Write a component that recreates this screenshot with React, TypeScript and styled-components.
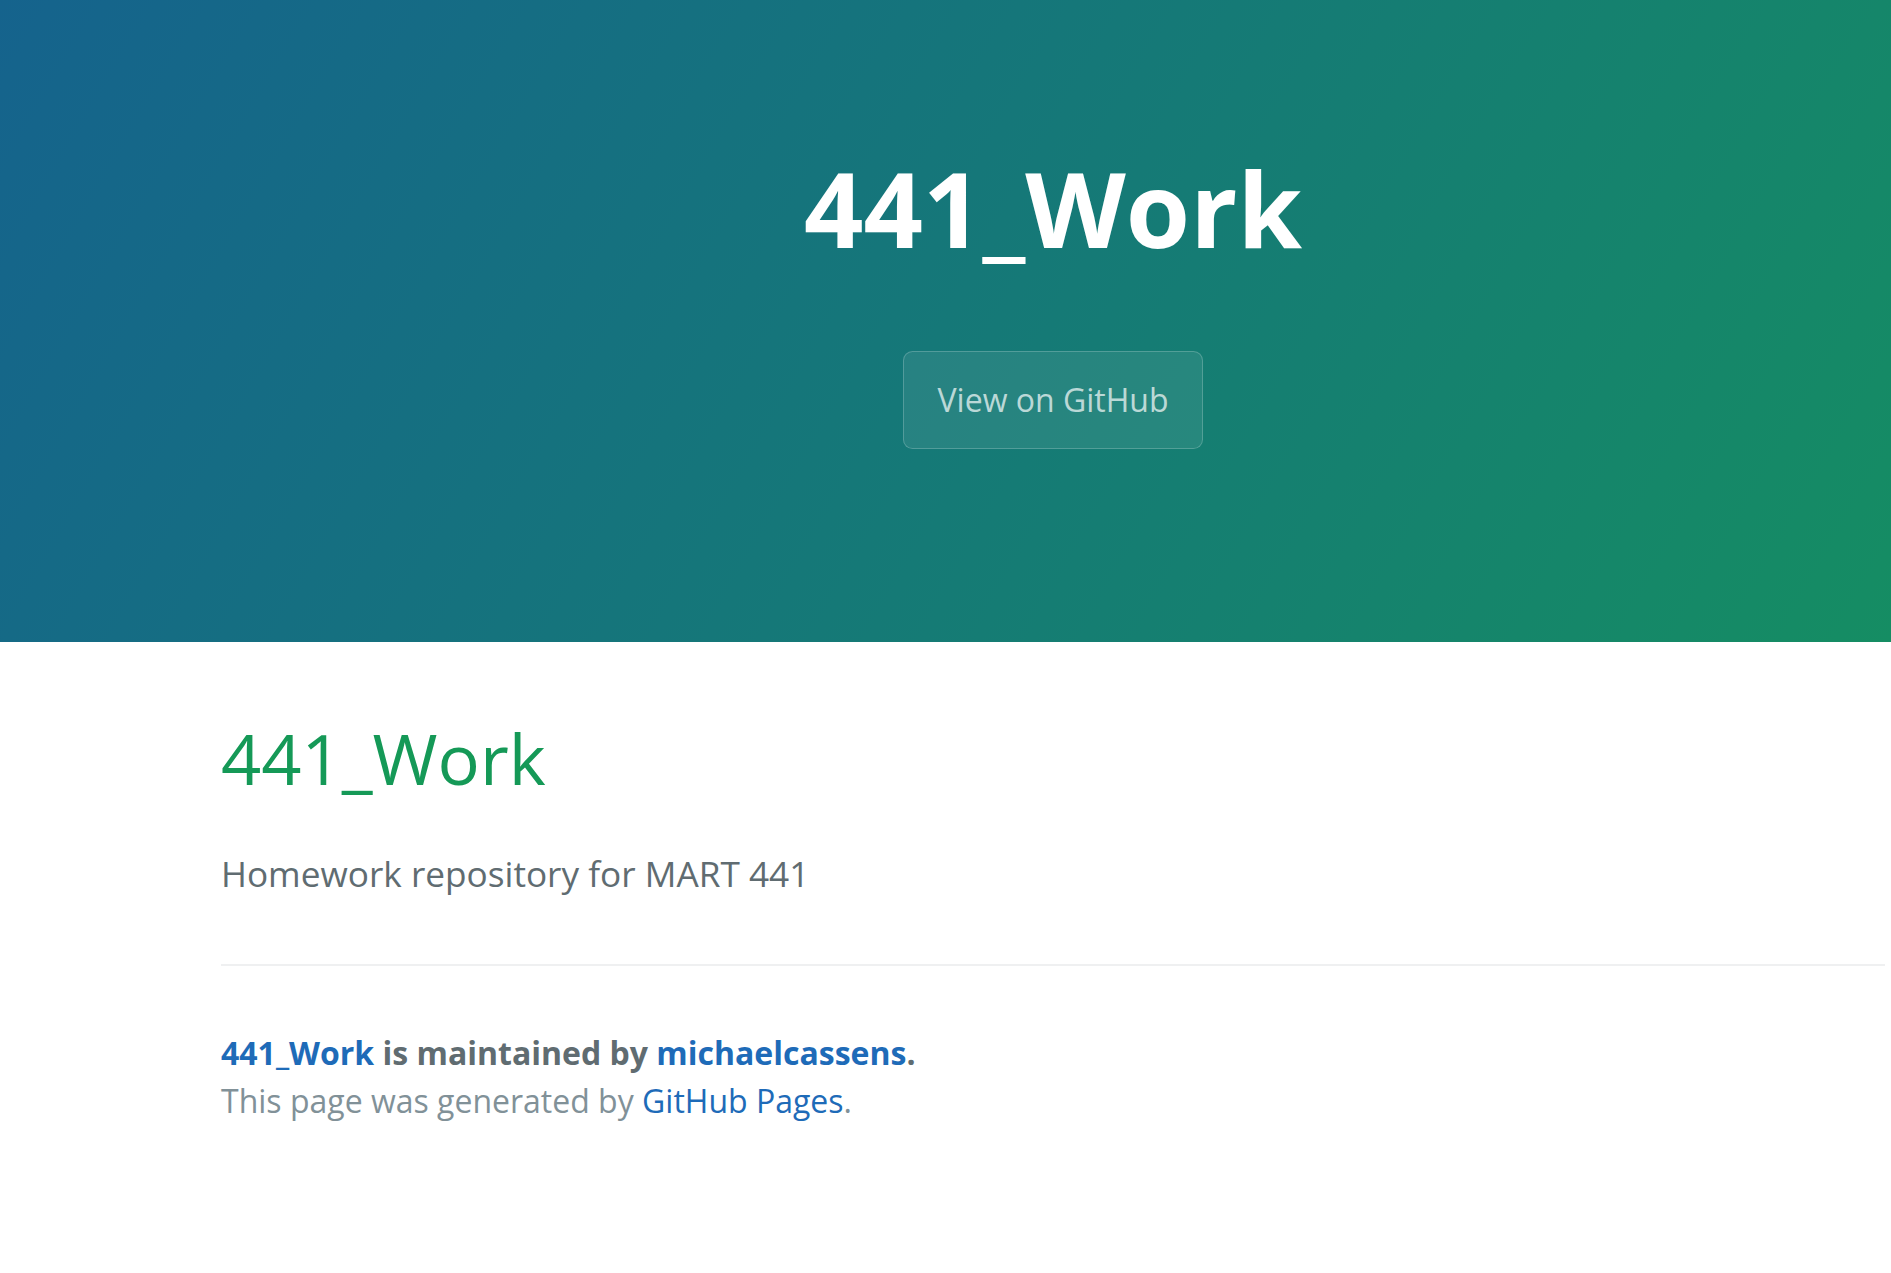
import styled, { createGlobalStyle } from "styled-components";

const GlobalStyle = createGlobalStyle`
  * { box-sizing: border-box; }
  html, body {
    margin: 0;
    padding: 0;
    background: #fff;
  }
  body {
    font-family: "Open Sans", "Helvetica Neue", Helvetica, Arial, sans-serif;
    line-height: 1.5;
    color: #606c71;
  }
`;

export default function App() {
  return (
    <>
      <GlobalStyle />
      <PageHeader>
        <ProjectName>441_Work</ProjectName>
        <HeaderButton href="#">View on GitHub</HeaderButton>
      </PageHeader>

      <MainContent>
        <SectionTitle>441_Work</SectionTitle>
        <Paragraph>Homework repository for MART 441</Paragraph>

        <SiteFooter>
          <FooterOwner>
            <FooterLink href="#">441_Work</FooterLink> is maintained by{" "}
            <FooterLink href="#">michaelcassens</FooterLink>.
          </FooterOwner>
          <FooterCredits>
            This page was generated by <FooterLink href="#">GitHub Pages</FooterLink>.
          </FooterCredits>
        </SiteFooter>
      </MainContent>
    </>
  );
}

const PageHeader = styled.section`
  display: flex;
  flex-direction: column;
  align-items: center;
  height: 642px;
  padding: 130px 0 0 215px;
  color: #fff;
  text-align: center;
  background-color: #157a78;
  background-image: linear-gradient(120deg, #15638d, #158d63);
`;

const ProjectName = styled.h1`
  margin: 0 0 3px;
  font-size: 104px;
  line-height: 156px;
  font-weight: 700;
`;

const HeaderButton = styled.a`
  display: inline-block;
  margin-top: 62px;
  padding: 24px 34px;
  font-size: 32px;
  line-height: 48px;
  color: rgba(255, 255, 255, 0.7);
  text-decoration: none;
  background-color: rgba(255, 255, 255, 0.08);
  border: 1px solid rgba(255, 255, 255, 0.2);
  border-radius: 9.6px;
`;

const MainContent = styled.main`
  margin: 0 6px 0 221px;
  padding: 64px 0;
  font-size: 35.2px;
  word-wrap: break-word;
`;

const SectionTitle = styled.h1`
  margin: 0 0 32px;
  font-size: 70.4px;
  line-height: 1.5;
  font-weight: normal;
  color: #159957;
`;

const Paragraph = styled.p`
  margin: 35.2px 0;
`;

const SiteFooter = styled.footer`
  margin-top: 64px;
  padding-top: 63px;
  border-top: 2px solid #eff0f1;
  font-size: 32px;
  line-height: 48px;
`;

const FooterOwner = styled.span`
  display: block;
  font-weight: 700;
`;

const FooterCredits = styled.span`
  color: #819198;
`;

const FooterLink = styled.a`
  color: #1e6bb8;
  text-decoration: none;
`;
